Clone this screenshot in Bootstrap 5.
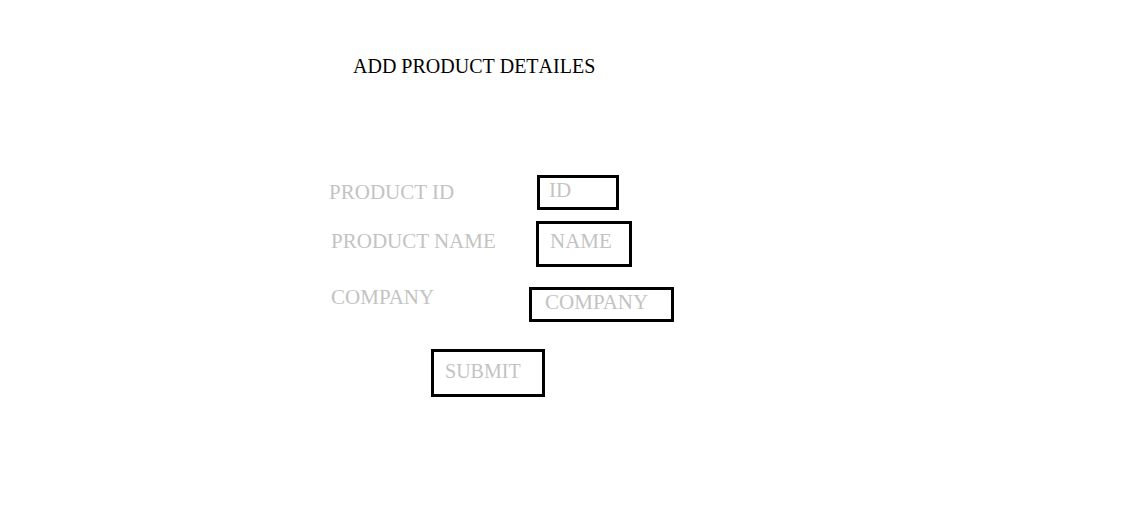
<!DOCTYPE html>
<html lang="en">
<head>
<meta charset="utf-8">
<meta name="viewport" content="width=device-width, initial-scale=1">
<title>Add product</title>
<link href="https://cdn.jsdelivr.net/npm/bootstrap@5.3.0/dist/css/bootstrap.min.css" rel="stylesheet">
<style>
body { font-family: "Liberation Serif", "Times New Roman", serif; font-size: 21px; line-height: 24px; background: #fff; color: #000; }
.product-page { padding: 54px 16px 48px 29.3%; }
.page-title { font-size: 20px; font-kerning: none; line-height: 24px; margin: 0 0 97px 24px; }
.field-label { width: 208px; color: #c3c3c3; padding-top: 5px; }
.boxed, .boxed:focus, .boxed:hover { border: 3px solid #000; background: #fff; color: #c3c3c3; font-size: 21px; line-height: 24px; }
.boxed::placeholder { color: #c3c3c3; opacity: 1; }
.field-id { width: 82px; padding: 0 0 5px 9px; }
.field-name { width: 96px; padding: 5px 0 11px 11px; }
.field-company { width: 145px; padding: 0 0 5px 13px; }
.label-name { width: 205px; padding-top: 8px; }
.label-company { width: 198px; padding-top: 0; }
.inset-row { padding-left: 2px; }
.name-row { margin-top: 11px; }
.company-row { margin-top: 18px; }
.company-row .boxed { margin-top: 2px; }
.submit-btn, .submit-btn:hover, .submit-btn:focus { width: 114px; padding: 7px 0 11px 11px; margin: 27px 0 0 102px; font-size: 20px; }
</style>
</head>
<body>
<main class="product-page">
  <h1 class="page-title fw-normal">ADD PRODUCT DETAILES</h1>
  <form>
    <div class="d-flex align-items-start">
      <label class="field-label flex-shrink-0" for="product-id">PRODUCT ID</label>
      <input class="form-control rounded-0 shadow-none boxed field-id" id="product-id" type="text" placeholder="ID">
    </div>
    <div class="d-flex align-items-start inset-row name-row">
      <label class="field-label label-name flex-shrink-0" for="product-name">PRODUCT NAME</label>
      <input class="form-control rounded-0 shadow-none boxed field-name" id="product-name" type="text" placeholder="NAME">
    </div>
    <div class="d-flex align-items-start inset-row company-row">
      <label class="field-label label-company flex-shrink-0" for="company">COMPANY</label>
      <input class="form-control rounded-0 shadow-none boxed field-company" id="company" type="text" placeholder="COMPANY">
    </div>
    <button class="btn rounded-0 boxed submit-btn text-start" type="submit">SUBMIT</button>
  </form>
</main>
<script src="https://cdn.jsdelivr.net/npm/bootstrap@5.3.0/dist/js/bootstrap.bundle.min.js"></script>
</body>
</html>
